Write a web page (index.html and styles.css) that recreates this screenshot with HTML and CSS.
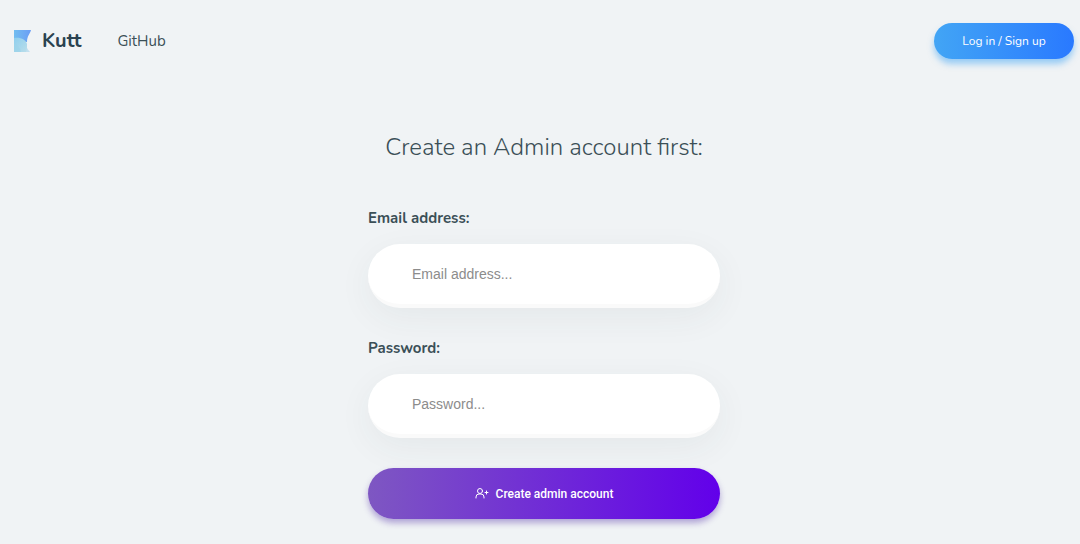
FILE: index.html
```html
<!DOCTYPE html>
<html lang="en">
<head>
    <meta charset="UTF-8">
    <meta name="viewport" content="width=device-width, initial-scale=1.0">
    <title>Kutt</title>
    <link rel="stylesheet" href="styles.css">
</head>
<body>
    <header class="header">
        <nav class="nav">
            <a class="logo" href="#">
                <svg width="17" height="22" viewBox="0 0 17 22" aria-hidden="true">
                    <defs>
                        <linearGradient id="top" x1="0" y1="0" x2="1" y2="0">
                            <stop offset="0" stop-color="#72bdf0"/>
                            <stop offset="1" stop-color="#6a9df5"/>
                        </linearGradient>
                        <linearGradient id="bottom" x1="0" y1="0" x2="1" y2="1">
                            <stop offset="0" stop-color="#8fcfee"/>
                            <stop offset="1" stop-color="#b9ddea"/>
                        </linearGradient>
                    </defs>
                    <path fill="#c3e0f0" d="M11 12c1 4 2 7 5 10H9z"/>
                    <path fill="url(#top)" d="M0 0h17c-1 4-4 6-4 12H0z"/>
                    <path fill="url(#bottom)" d="M0 8c7-1 12 2 13 6 0 3 0 6-1 8H0z"/>
                    <path fill="#9bd3ea" d="M0 14c4 1 6 4 7 8H0z" opacity=".7"/>
                </svg>
                <span>Kutt</span>
            </a>
            <a class="link" href="#">GitHub</a>
        </nav>
        <button class="button login" type="button">Log in / Sign up</button>
    </header>
    <main class="main">
        <h2>Create an Admin account first:</h2>
        <form class="form">
            <label for="email">Email address:</label>
            <input type="email" id="email" placeholder="Email address...">
            <label for="password">Password:</label>
            <input type="password" id="password" placeholder="Password...">
            <button class="button create" type="submit">
                <svg width="14" height="14" viewBox="0 0 14 14" fill="none" stroke="currentColor" stroke-linecap="round" aria-hidden="true">
                    <circle cx="5" cy="4" r="2.5"/>
                    <path d="M1 11v-1a3 3 0 0 1 3-3h2a3 3 0 0 1 3 3v1M11.500 4v3M10 5.500h3"/>
                </svg>
                Create admin account
            </button>
        </form>
    </main>
</body>
</html>
```
FILE: styles.css
```css
* {
    box-sizing: border-box;
}

body {
    margin: 0;
    background-color: #f0f3f5;
    color: #3b4f57;
    font-family: Nunito, Lato, sans-serif;
    font-size: 15px;
}

a {
    color: inherit;
    text-decoration: none;
}

.header {
    display: flex;
    justify-content: space-between;
    align-items: center;
    height: 82px;
    padding: 0 6px 0 14px;
}

.nav {
    display: flex;
    align-items: center;
    gap: 36px;
}

.logo {
    display: flex;
    align-items: center;
    gap: 11px;
    font-size: 20px;
    font-weight: bold;
    line-height: 24px;
    color: #2a4250;
}

.button {
    display: flex;
    justify-content: center;
    align-items: center;
    border: none;
    border-radius: 100px;
    color: #fff;
    cursor: pointer;
}

.login {
    width: 140px;
    height: 36px;
    font-family: inherit;
    font-size: 12px;
    background: linear-gradient(to right, #42a5f5, #2979ff);
    box-shadow: 0 5px 6px rgba(66, 165, 245, 0.5);
}

.main {
    display: flex;
    flex-direction: column;
    align-items: center;
    padding: 49px 0 24px 8px;
}

.main h2 {
    margin: 0 0 44px;
    font-size: 24px;
    font-weight: 300;
    line-height: 32px;
}

.form {
    display: flex;
    flex-direction: column;
    width: 100%;
    max-width: 352px;
}

.form label {
    margin-bottom: 15px;
    font-size: 15px;
    font-weight: bold;
    line-height: 22px;
}

.form input {
    height: 64px;
    margin-bottom: 29px;
    padding: 0 44px;
    border: none;
    border-bottom: 4px solid #fafafa;
    border-radius: 100px;
    outline: none;
    background-color: #fff;
    box-shadow: 0 10px 35px rgba(50, 70, 70, 0.06);
    color: #444;
    font-family: "Liberation Sans", Arial, sans-serif;
    font-size: 14px;
}

.form input::placeholder {
    color: #8c8c8c;
}

.create {
    gap: 7px;
    height: 51px;
    margin-top: 1px;
    font-family: Roboto, sans-serif;
    font-size: 12px;
    font-weight: 500;
    background: linear-gradient(to right, #7e57c2, #6200ea);
    box-shadow: 0 4px 6px rgba(81, 45, 168, 0.4);
}
```
